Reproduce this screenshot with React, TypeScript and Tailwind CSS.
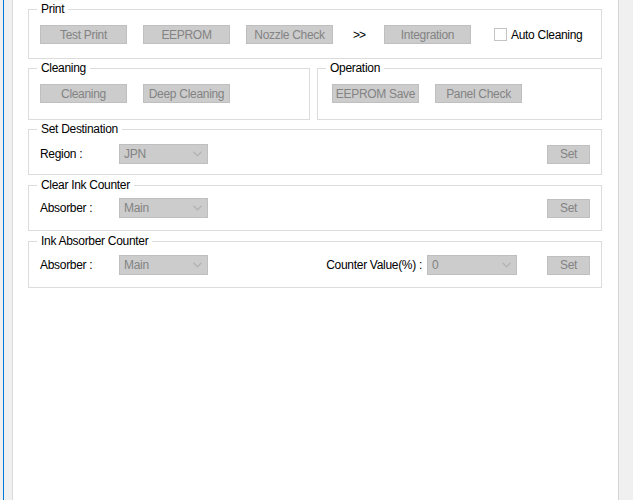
import React from 'react';

const font = { fontFamily: '"Liberation Sans", Arial, "Noto Sans CJK JP", sans-serif' };

function DisabledButton({ label, className = '' }: { label: string; className?: string }) {
  return (
    <div
      className={`flex items-center justify-center h-[19px] bg-[#cccccc] border border-[#bfbfbf] text-[#838383] text-[12px] leading-none ${className}`}
    >
      {label}
    </div>
  );
}

function DisabledSelect({ value, className = '' }: { value: string; className?: string }) {
  return (
    <div
      className={`flex items-center justify-between h-[20px] bg-[#cccccc] border border-[#bfbfbf] pl-[4px] pr-[5px] text-[#838383] text-[12px] leading-none ${className}`}
    >
      <span>{value}</span>
      <svg width="9" height="6" viewBox="0 0 9 6" fill="none">
        <path d="M0.5 0.8 L4.5 4.8 L8.5 0.8" stroke="#b4b4b4" strokeWidth="1.3" />
      </svg>
    </div>
  );
}

function GroupBox({
  title,
  className = '',
  bodyClassName = '',
  children,
}: {
  title: string;
  className?: string;
  bodyClassName?: string;
  children: React.ReactNode;
}) {
  return (
    <fieldset className={`border border-[#dcdcdc] ${className}`}>
      <legend className="ml-[8px] px-[4px] text-[12px] leading-[15px] text-black">{title}</legend>
      <div className={bodyClassName}>{children}</div>
    </fieldset>
  );
}

export default function App() {
  return (
    <div className="flex w-[633px] h-[500px] bg-white text-[12px] tracking-[-0.3px] text-black" style={font}>
      {/* left window edge */}
      <div className="w-[3px] bg-[#f0f0f0]" />
      <div className="w-px bg-[#0078d7]" />
      <div className="w-[8px] bg-[#f0f0f0]" />
      <div className="w-px bg-[#dadada]" />

      {/* main panel */}
      <div className="flex-1 flex flex-col pl-[15px] pr-[16px]">
        <GroupBox title="Print" className="mt-[2px]" bodyClassName="pl-[11px] pt-[8px] pb-[14px]">
          <div className="flex items-center">
            <DisabledButton label="Test Print" className="w-[87px]" />
            <DisabledButton label="EEPROM" className="w-[87px] ml-[16px]" />
            <DisabledButton label="Nozzle Check" className="w-[87px] ml-[16px]" />
            <span className="ml-[20px] w-[14px] tracking-[-1px]">&gt;&gt;</span>
            <DisabledButton label="Integration" className="w-[87px] ml-[17px]" />
            <div className="ml-[23px] w-[13px] h-[13px] border border-[#c4c4c4] bg-white" />
            <span className="ml-[4px]">Auto Cleaning</span>
          </div>
        </GroupBox>

        <div className="flex gap-[7px] mt-[2px]">
          <GroupBox title="Cleaning" className="w-[282px]" bodyClassName="pl-[11px] pt-[8px] pb-[16px]">
            <div className="flex">
              <DisabledButton label="Cleaning" className="w-[87px]" />
              <DisabledButton label="Deep Cleaning" className="w-[87px] ml-[16px]" />
            </div>
          </GroupBox>
          <GroupBox title="Operation" className="flex-1" bodyClassName="pl-[14px] pt-[8px] pb-[16px]">
            <div className="flex">
              <DisabledButton label="EEPROM Save" className="w-[87px]" />
              <DisabledButton label="Panel Check" className="w-[87px] ml-[16px]" />
            </div>
          </GroupBox>
        </div>

        <GroupBox title="Set Destination" className="mt-[2px]" bodyClassName="pl-[11px] pr-[11px] pt-[7px] pb-[10px]">
          <div className="flex items-center">
            <span className="w-[79px]">Region :</span>
            <DisabledSelect value="JPN" className="w-[89px]" />
            <DisabledButton label="Set" className="w-[43px] ml-auto" />
          </div>
        </GroupBox>

        <GroupBox title="Clear Ink Counter" className="mt-[3px]" bodyClassName="pl-[11px] pr-[11px] pt-[5px] pb-[12px]">
          <div className="flex items-center">
            <span className="w-[79px]">Absorber :</span>
            <DisabledSelect value="Main" className="w-[89px]" />
            <DisabledButton label="Set" className="w-[43px] ml-auto" />
          </div>
        </GroupBox>

        <GroupBox title="Ink Absorber Counter" className="mt-[3px]" bodyClassName="pl-[11px] pr-[11px] pt-[6px] pb-[12px]">
          <div className="flex items-center">
            <span className="w-[79px]">Absorber :</span>
            <DisabledSelect value="Main" className="w-[89px]" />
            <span className="ml-auto">Counter Value(%) :</span>
            <DisabledSelect value="0" className="w-[90px] ml-[5px]" />
            <DisabledButton label="Set" className="w-[43px] ml-[30px]" />
          </div>
        </GroupBox>
      </div>

      {/* right window edge */}
      <div className="w-px bg-[#d4d4d4]" />
      <div className="w-[14px] bg-[#f0f0f0]" />
    </div>
  );
}
